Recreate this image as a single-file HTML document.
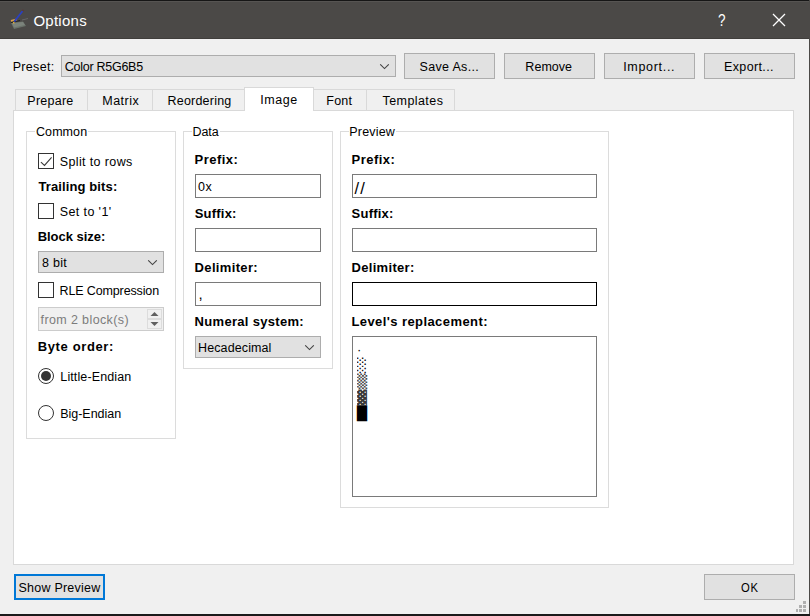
<!DOCTYPE html>
<html><head><meta charset="utf-8"><title>Options</title>
<style>
html,body{margin:0;padding:0;}
body{width:810px;height:616px;position:relative;overflow:hidden;background:#f0f0f0;font-family:"Liberation Sans",sans-serif;font-size:12px;color:#000;}
.a{position:absolute;white-space:nowrap;}
.t{position:absolute;white-space:nowrap;line-height:16px;height:16px;font-size:12.5px;}
.b{font-weight:bold;}
.btn{position:absolute;box-sizing:border-box;background:#e1e1e1;border:1px solid #adadad;text-align:center;line-height:24px;}
.combo{position:absolute;box-sizing:border-box;background:#e1e1e1;border:1px solid #adadad;}
.edit{position:absolute;box-sizing:border-box;background:#fff;border:1px solid #7a7a7a;}
.grp{position:absolute;box-sizing:border-box;border:1px solid #dcdcdc;}
.gl{position:absolute;background:#fff;}
.tab{position:absolute;box-sizing:border-box;top:89px;height:21px;background:#f0f0f0;border:1px solid #d9d9d9;border-bottom:none;text-align:center;line-height:21px;}
.k{position:absolute;left:4px;font-family:"DejaVu Sans Mono","DejaVu Sans",monospace;font-size:13.5px;line-height:16px;height:16px;white-space:pre;transform-origin:0 0;transform:scale(1.23,1);}
.cb{position:absolute;box-sizing:border-box;width:16px;height:16px;border:1px solid #333;background:#fff;}
.rb{position:absolute;box-sizing:border-box;width:16px;height:16px;border:1px solid #333;background:#fff;border-radius:50%;}
</style></head><body>
<!-- title bar -->
<div class="a" id="titlebar" style="left:0;top:0;width:810px;height:39px;background:#4b4947;border-top:1px solid #161616;border-bottom:1px solid #403e3c;box-sizing:border-box;"></div>
<div class="a" style="left:0;top:1px;width:810px;height:1px;background:#565452;"></div>
<svg class="a" style="left:9px;top:8px" width="20" height="24" viewBox="0 0 20 24">
<polygon points="2,15 14,13.5 17,18 5,21" fill="#6a726a"/>
<polygon points="3,15.3 14,14 16,17 5,19.5" fill="#7b837b"/>
<path d="M2 13 L8 11.5" stroke="#d9a04a" stroke-width="2"/>
<path d="M2 14.5 L11 12.5" stroke="#222" stroke-width="1.2"/>
<path d="M13 12 L19 10.5" stroke="#666" stroke-width="1"/>
<path d="M5.2 13.6 L13.8 2.8" stroke="#2a40c0" stroke-width="1.7"/>
<path d="M13.5 3 L14.5 1.8" stroke="#5a3a3a" stroke-width="2"/>
<path d="M5 14 L4.5 15.5" stroke="#e0b040" stroke-width="1.5"/>
</svg>
<div class="a" id="help" style="left:718px;top:10px;font-size:16.5px;line-height:20px;color:#fff;transform-origin:0 0;transform:scaleX(0.82);">?</div>
<svg class="a" style="left:772px;top:13px" width="14" height="14" viewBox="0 0 14 14"><path d="M1 1 L13 13 M13 1 L1 13" stroke="#fff" stroke-width="1.3" fill="none"/></svg>

<!-- preset row -->
<div class="combo" style="left:61px;top:55px;width:335px;height:22px;">
<svg class="a" style="left:317px;top:8px" width="11" height="6" viewBox="0 0 11 6"><path d="M1.2 0.3 L5.5 4.6 L9.8 0.3" stroke="#444" stroke-width="1.05" fill="none"/></svg></div>
<div class="btn" style="left:404px;top:53px;width:91px;height:26px;"></div>
<div class="btn" style="left:504px;top:53px;width:91px;height:26px;"></div>
<div class="btn" style="left:604px;top:53px;width:91px;height:26px;"></div>
<div class="btn" style="left:704px;top:53px;width:91px;height:26px;"></div>

<!-- pane -->
<div class="a" style="left:13px;top:110px;width:781px;height:455px;box-sizing:border-box;background:#fff;border:1px solid #d9d9d9;"></div>
<!-- tabs -->
<div class="tab" style="left:15px;width:73px;"></div>
<div class="tab" style="left:87px;width:66px;"></div>
<div class="tab" style="left:152px;width:93px;"></div>
<div class="tab" style="left:313px;width:54px;"></div>
<div class="tab" style="left:366px;width:89px;"></div>
<div class="tab" style="left:244px;width:70px;top:87px;height:24px;background:#fff;"></div>

<!-- Common group -->
<div class="grp" style="left:26px;top:131px;width:150px;height:308px;"></div>
<div class="gl" style="left:35px;top:128px;width:53px;height:8px;"></div>
<div class="cb" style="left:38px;top:153px;"><svg class="a" style="left:0;top:0" width="14" height="14" viewBox="0 0 14 14"><path d="M1.9 8.2 L5.5 11.4 L12.6 3.4" stroke="#3a3a3a" stroke-width="1.1" fill="none"/></svg></div>
<div class="cb" style="left:38px;top:203px;"></div>
<div class="combo" style="left:38px;top:251px;width:126px;height:22px;">
<svg class="a" style="left:108px;top:8px" width="11" height="6" viewBox="0 0 11 6"><path d="M1.2 0.3 L5.5 4.6 L9.8 0.3" stroke="#444" stroke-width="1.05" fill="none"/></svg></div>
<div class="cb" style="left:38px;top:282px;"></div>
<div class="a" style="left:38px;top:307px;width:126px;height:24px;box-sizing:border-box;background:#f0f0f0;border:1px solid #cccccc;">
<div class="a" style="left:108px;top:1px;width:15px;height:10px;background:#f0f0f0;border:1px solid #dcdcdc;box-sizing:border-box;"></div>
<div class="a" style="left:108px;top:11px;width:15px;height:10px;background:#f0f0f0;border:1px solid #dcdcdc;box-sizing:border-box;"></div>
<svg class="a" style="left:111px;top:3px" width="9" height="16" viewBox="0 0 9 16"><path d="M0.5 5 L4.5 1 L8.5 5 Z M0.5 11 L4.5 15 L8.5 11 Z" fill="#606060"/></svg>
</div>
<div class="rb" style="left:38px;top:368px;"><div class="a" style="left:2px;top:2px;width:10px;height:10px;border-radius:50%;background:#333;"></div></div>
<div class="rb" style="left:38px;top:405px;"></div>

<!-- Data group -->
<div class="grp" style="left:183px;top:131px;width:150px;height:238px;"></div>
<div class="gl" style="left:192px;top:128px;width:28px;height:8px;"></div>
<div class="edit" style="left:195px;top:174px;width:126px;height:24px;"></div>
<div class="edit" style="left:195px;top:228px;width:126px;height:24px;"></div>
<div class="edit" style="left:195px;top:282px;width:126px;height:24px;"></div>
<div class="combo" style="left:195px;top:336px;width:126px;height:22px;">
<svg class="a" style="left:108px;top:8px" width="11" height="6" viewBox="0 0 11 6"><path d="M1.2 0.3 L5.5 4.6 L9.8 0.3" stroke="#444" stroke-width="1.05" fill="none"/></svg></div>

<!-- Preview group -->
<div class="grp" style="left:340px;top:131px;width:269px;height:377px;"></div>
<div class="gl" style="left:349px;top:128px;width:47px;height:8px;"></div>
<div class="edit" style="left:352px;top:174px;width:245px;height:24px;"></div>
<div class="edit" style="left:352px;top:228px;width:245px;height:24px;"></div>
<div class="edit" style="left:352px;top:282px;width:245px;height:24px;border-color:#000;"></div>
<div class="edit" style="left:352px;top:336px;width:245px;height:161px;">
<span class="k" style="left:4px;top:5px;font-family:'Liberation Sans',sans-serif;font-size:13px;transform:none;">·</span>
<span class="k" style="top:20px;">░</span>
<span class="k" style="top:36px;color:#4a4a4a;">▒</span>
<span class="k" style="top:52px;color:#3a3a3a;">▓</span>
<span class="k" style="top:68px;">█</span></div>

<!-- bottom -->
<div class="btn" style="left:14px;top:574px;width:91px;height:26px;border:2px solid #0078d7;line-height:22px;"></div>
<div class="btn" style="left:704px;top:574px;width:91px;height:26px;"></div>
<!-- size grip -->
<svg class="a" style="left:795px;top:600px" width="12" height="13" viewBox="0 0 12 13" shape-rendering="crispEdges"><g fill="#b0b0b0">
<rect x="8" y="1" width="3" height="3"/><rect x="4" y="5" width="3" height="3"/><rect x="8" y="5" width="3" height="3"/>
<rect x="1" y="9" width="2" height="3"/><rect x="4" y="9" width="3" height="3"/><rect x="8" y="9" width="3" height="3"/></g></svg>
<span class="t" id="title" style="left:33.46px;top:13.10px;letter-spacing:0.248px;font-size:15px;color:#fff;">Options</span>
<span class="t" id="preset" style="left:12.71px;top:58.97px;letter-spacing:0.315px;">Preset:</span>
<span class="t" id="presetv" style="left:64.86px;top:58.97px;letter-spacing:-0.275px;">Color R5G6B5</span>
<span class="t" id="tab1" style="left:27.37px;top:92.97px;letter-spacing:0.248px;">Prepare</span>
<span class="t" id="tab2" style="left:102.32px;top:92.97px;letter-spacing:0.468px;">Matrix</span>
<span class="t" id="tab3" style="left:167.47px;top:92.97px;letter-spacing:0.221px;">Reordering</span>
<span class="t" id="tab4" style="left:260.26px;top:91.97px;letter-spacing:0.575px;">Image</span>
<span class="t" id="tab5" style="left:326.32px;top:92.97px;letter-spacing:0.217px;">Font</span>
<span class="t" id="tab6" style="left:382.52px;top:92.97px;letter-spacing:0.425px;">Templates</span>
<span class="t" id="b1" style="left:419.53px;top:58.97px;letter-spacing:0.322px;">Save As...</span>
<span class="t" id="b2" style="left:525.37px;top:58.97px;letter-spacing:0.028px;">Remove</span>
<span class="t" id="b3" style="left:623.13px;top:58.97px;letter-spacing:0.694px;">Import...</span>
<span class="t" id="b4" style="left:724.00px;top:58.97px;letter-spacing:0.364px;">Export...</span>
<span class="t" id="g1" style="left:36.03px;top:123.97px;letter-spacing:0.072px;">Common</span>
<span class="t" id="c1" style="left:59.70px;top:153.97px;letter-spacing:0.378px;">Split to rows</span>
<span class="t" id="l1" style="left:38.39px;top:178.80px;letter-spacing:0.121px;font-weight:bold;font-size:13px;">Trailing bits:</span>
<span class="t" id="c2" style="left:59.70px;top:203.97px;letter-spacing:0.399px;">Set to '1'</span>
<span class="t" id="l2" style="left:37.66px;top:228.80px;letter-spacing:-0.018px;font-weight:bold;font-size:13px;">Block size:</span>
<span class="t" id="cv1" style="left:41.91px;top:254.97px;letter-spacing:0.300px;">8 bit</span>
<span class="t" id="c3" style="left:59.54px;top:282.97px;letter-spacing:-0.132px;">RLE Compression</span>
<span class="t" id="sp" style="left:40.53px;top:311.97px;letter-spacing:0.387px;color:#7c7c7c;">from 2 block(s)</span>
<span class="t" id="l3" style="left:37.66px;top:338.80px;letter-spacing:0.638px;font-weight:bold;font-size:13px;">Byte order:</span>
<span class="t" id="r1" style="left:60.32px;top:368.97px;letter-spacing:0.116px;">Little-Endian</span>
<span class="t" id="r2" style="left:60.32px;top:405.97px;letter-spacing:-0.042px;">Big-Endian</span>
<span class="t" id="g2" style="left:192.54px;top:123.97px;letter-spacing:-0.087px;">Data</span>
<span class="t" id="d1" style="left:194.59px;top:151.80px;letter-spacing:0.468px;font-weight:bold;font-size:13px;">Prefix:</span>
<span class="t" id="dv1" style="left:198.04px;top:178.97px;letter-spacing:0.560px;">0x</span>
<span class="t" id="d2" style="left:194.74px;top:205.80px;letter-spacing:0.207px;font-weight:bold;font-size:13px;">Suffix:</span>
<span class="t" id="d3" style="left:194.59px;top:259.80px;letter-spacing:0.341px;font-weight:bold;font-size:13px;">Delimiter:</span>
<span class="t" id="dv3" style="left:198.50px;top:286.10px;letter-spacing:0.000px;font-size:15px;">,</span>
<span class="t" id="d4" style="left:194.59px;top:313.80px;letter-spacing:0.305px;font-weight:bold;font-size:13px;">Numeral system:</span>
<span class="t" id="dcv" style="left:198.08px;top:339.97px;letter-spacing:0.103px;">Hecadecimal</span>
<span class="t" id="g3" style="left:349.37px;top:123.97px;letter-spacing:0.175px;">Preview</span>
<span class="t" id="p1" style="left:351.47px;top:151.80px;letter-spacing:0.495px;font-weight:bold;font-size:13px;">Prefix:</span>
<span class="t" id="pv1" style="left:354.59px;top:179.58px;letter-spacing:1.190px;font-size:16.5px;">//</span>
<span class="t" id="p2" style="left:351.61px;top:205.80px;letter-spacing:0.208px;font-weight:bold;font-size:13px;">Suffix:</span>
<span class="t" id="p3" style="left:351.47px;top:259.80px;letter-spacing:0.323px;font-weight:bold;font-size:13px;">Delimiter:</span>
<span class="t" id="p4" style="left:351.47px;top:313.80px;letter-spacing:0.416px;font-weight:bold;font-size:13px;">Level's replacement:</span>
<span class="t" id="bs" style="left:18.56px;top:579.97px;letter-spacing:0.221px;">Show Preview</span>
<span class="t" id="bo" style="left:741.28px;top:579.97px;letter-spacing:0.700px;transform-origin:0 0;transform:scaleX(0.9);">OK</span>
<!-- window borders -->
<div class="a" style="left:809px;top:0;width:1px;height:616px;background:#4b4947;"></div>
<div class="a" style="left:0;top:614px;width:810px;height:2px;background:#1a1a1a;"></div>
</body></html>
